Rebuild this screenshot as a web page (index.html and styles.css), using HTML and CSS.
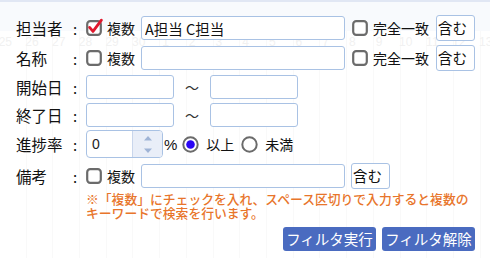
FILE: index.html
```html
<!DOCTYPE html>
<html lang="ja">
<head>
    <meta charset="UTF-8">
    <title>フィルタ</title>
    <link rel="stylesheet" href="styles.css">
</head>
<body>
    <!-- calendar page behind the filter popup -->
    <div class="page">
        <div class="page-head"></div>
        <div class="days">
            <span>25</span><span>26</span><span>27</span><span>28</span><span>29</span><span>30</span><span>1</span>
            <span>2</span><span>3</span><span>4</span><span>5</span><span>6</span><span>7</span><span>8</span>
            <span>9</span><span>10</span><span>11</span><span>12</span><span>13</span>
        </div>
    </div>

    <div class="filter">
        <div class="row row-1">
            <span class="lbl">担当者</span><span class="colon">:</span>
            <svg class="cb" width="16" height="16" viewBox="0 0 16 16">
                <rect x="1.2" y="1.2" width="13.6" height="13.6" rx="3" fill="#fff" stroke="#6b6b6b" stroke-width="2.2"/>
                <path d="M3.6 7.4 L7 11.4 L15.4 0.2" fill="none" stroke="#e0182d" stroke-width="2.8" stroke-linecap="round" stroke-linejoin="round"/>
            </svg>
            <span class="opt">複数</span>
            <input class="txt wide" type="text" value="A担当 C担当">
            <svg class="cb cb-exact" width="16" height="16" viewBox="0 0 16 16">
                <rect x="1.2" y="1.2" width="13.6" height="13.6" rx="3" fill="#fff" stroke="#6b6b6b" stroke-width="2.2"/>
            </svg>
            <span class="opt">完全一致</span>
            <span class="mode mode-right">含む</span>
        </div>

        <div class="row row-2">
            <span class="lbl">名称</span><span class="colon">:</span>
            <svg class="cb" width="16" height="16" viewBox="0 0 16 16">
                <rect x="1.2" y="1.2" width="13.6" height="13.6" rx="3" fill="#fff" stroke="#6b6b6b" stroke-width="2.2"/>
            </svg>
            <span class="opt">複数</span>
            <input class="txt wide" type="text">
            <svg class="cb cb-exact" width="16" height="16" viewBox="0 0 16 16">
                <rect x="1.2" y="1.2" width="13.6" height="13.6" rx="3" fill="#fff" stroke="#6b6b6b" stroke-width="2.2"/>
            </svg>
            <span class="opt">完全一致</span>
            <span class="mode mode-right">含む</span>
        </div>

        <div class="row row-3">
            <span class="lbl">開始日</span><span class="colon">:</span>
            <input class="txt date" type="text">
            <span class="tilde">〜</span>
            <input class="txt date" type="text">
        </div>

        <div class="row row-4">
            <span class="lbl">終了日</span><span class="colon">:</span>
            <input class="txt date" type="text">
            <span class="tilde">〜</span>
            <input class="txt date" type="text">
        </div>

        <div class="row row-5">
            <span class="lbl">進捗率</span><span class="colon">:</span>
            <div class="num">
                <span class="num-val">0</span>
                <span class="spin">
                    <svg width="10" height="6" viewBox="0 0 10 6"><path d="M1 5.5 L5 1 L9 5.5 Z" fill="#9fb4d6"/></svg>
                    <svg width="10" height="6" viewBox="0 0 10 6"><path d="M1 0.5 L5 5 L9 0.5 Z" fill="#9fb4d6"/></svg>
                </span>
            </div>
            <span class="pct">%</span>
            <svg class="rd" width="17" height="17" viewBox="0 0 17 17">
                <circle cx="8.5" cy="8.5" r="7.2" fill="#fff" stroke="#6b6b6b" stroke-width="2"/>
                <circle cx="8.5" cy="8.5" r="4.3" fill="#2a05f5"/>
            </svg>
            <span class="opt">以上</span>
            <svg class="rd" width="17" height="17" viewBox="0 0 17 17">
                <circle cx="8.5" cy="8.5" r="7.2" fill="#fff" stroke="#6b6b6b" stroke-width="2"/>
            </svg>
            <span class="opt">未満</span>
        </div>

        <div class="row row-6">
            <span class="lbl">備考</span><span class="colon">:</span>
            <svg class="cb" width="16" height="16" viewBox="0 0 16 16">
                <rect x="1.2" y="1.2" width="13.6" height="13.6" rx="3" fill="#fff" stroke="#6b6b6b" stroke-width="2.2"/>
            </svg>
            <span class="opt">複数</span>
            <input class="txt wide" type="text">
            <span class="mode mode-note">含む</span>
        </div>

        <p class="note">※「複数」にチェックを入れ、スペース区切りで入力すると複数のキーワードで検索を行います。</p>

        <div class="actions">
            <button class="btn">フィルタ実行</button>
            <button class="btn">フィルタ解除</button>
        </div>
    </div>
</body>
</html>
```

FILE: styles.css
```css
body {
margin: 0;
width: 490px;
height: 258px;
overflow: hidden;
position: relative;
background: #fff;
font-family: "Noto Sans CJK JP", "Noto Sans", sans-serif;
color: #111;
}

/* page behind the popup */
.page {
height: 258px;
background-image: repeating-linear-gradient(90deg, transparent 0, transparent 25.7px, #f3f3f3 25.7px, #f3f3f3 26.7px);
}

.page-head {
height: 31px;
background: #f1f4fa;
border-top: 2px solid #c3cfe8;
box-sizing: border-box;
}

.days {
display: flex;
margin-left: -8px;
padding-top: 4px;
font-family: "Liberation Sans", sans-serif;
font-size: 12px;
color: #e2e2e2;
}

.days span {
width: 26.7px;
text-align: center;
flex: none;
}

/* the filter popup */
.filter {
position: absolute;
top: 0;
left: 0;
right: 0;
bottom: 0;
padding: 15px 16px 0 16px;
background: rgba(255, 255, 255, 0.5);
}

.row {
display: flex;
align-items: center;
white-space: nowrap;
}

.row > * {
flex: none;
}

.row-1 { height: 26px; }
.row-2 { height: 26px; margin-top: 4px; }
.row-3 { height: 24px; margin-top: 4px; }
.row-4 { height: 24px; margin-top: 4px; }
.row-5 { height: 28px; margin-top: 3px; }
.row-6 { height: 26px; margin-top: 5px; }

.lbl {
width: 57px;
font-size: 15.5px;
}

.colon {
width: 13px;
font-size: 15px;
}

.cb {
overflow: visible;
}

.cb-exact {
margin-left: 7px;
}

.opt {
font-size: 14px;
margin-left: 5px;
}

.txt {
box-sizing: border-box;
height: 24px;
border: 1px solid #a9c2e4;
border-radius: 3px;
padding: 0 3px;
font-family: "Noto Sans CJK JP", sans-serif;
font-size: 14.5px;
color: #111;
background: #fff;
outline: none;
}

.wide {
width: 204px;
margin-left: 6px;
}

.date {
width: 88px;
}

.tilde {
width: 36px;
text-align: center;
font-size: 14px;
color: #333;
}

.mode {
box-sizing: border-box;
width: 39px;
height: 26px;
border: 1px solid #a9c2e4;
border-radius: 3px;
padding-left: 1px;
font-size: 14.5px;
line-height: 23px;
background: #fff;
}

.mode-right {
margin-left: 7px;
}

.mode-note {
margin-left: 6px;
}

.num {
box-sizing: border-box;
display: flex;
width: 77px;
height: 28px;
border: 1px solid #a9c2e4;
border-radius: 4px;
overflow: hidden;
background: #fff;
}

.num-val {
flex: 1;
padding-left: 5px;
font-family: "Liberation Sans", sans-serif;
font-size: 14px;
line-height: 26px;
color: #222;
}

.spin {
width: 29px;
display: flex;
flex-direction: column;
align-items: center;
justify-content: center;
gap: 7px;
background: #e9eef8;
border-left: 1px solid #c9d6ec;
}

.spin svg {
display: block;
}

.pct {
font-family: "Liberation Sans", sans-serif;
font-size: 15px;
margin-left: 1px;
}

.rd {
margin-left: 5px;
}

.rd + .opt {
margin-left: 7px;
}

.opt + .rd {
margin-left: 7px;
}

.note {
margin: 3px 0 0 70px;
width: 386px;
font-size: 12.8px;
line-height: 14px;
color: #e8752b;
font-weight: 500;
}

.actions {
display: flex;
justify-content: flex-end;
gap: 6px;
margin-top: 7px;
margin-right: -1px;
}

.btn {
width: 93px;
height: 24px;
padding: 0;
border: none;
border-radius: 3px;
background: #4a6bc0;
color: #fff;
font-family: "Noto Sans CJK JP", sans-serif;
font-size: 14.5px;
line-height: 24px;
cursor: pointer;
}
```
